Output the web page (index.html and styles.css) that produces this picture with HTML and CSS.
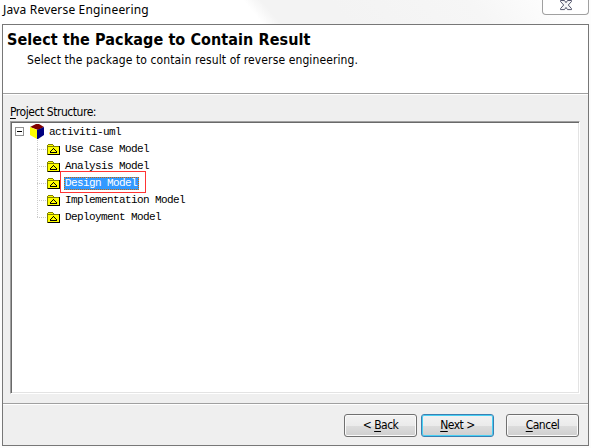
FILE: index.html
```html
<!DOCTYPE html>
<html lang="en">
<head>
<meta charset="utf-8">
<title>Java Reverse Engineering</title>
<link rel="stylesheet" href="styles.css">
</head>
<body>
<svg class="defs" width="0" height="0">
  <symbol id="folder" viewBox="0 0 14 12" shape-rendering="crispEdges">
    <path fill="#808000" d="M1 0h5v1h1v1h6v9H0V1h1z"/>
    <path fill="#ff0" d="M1 1h5v1H1zM1 3h11v7H1z"/>
    <path fill="#000" d="M12 2h1v9H1v-1h11zM6 4h1v1H6zM5 5h1v1H5zM7 5h1v1H7zM4 6h1v1H4zM8 6h1v1H8zM3 7h1v1H3zM9 7h1v1H9zM3 8h7v1H3z"/>
  </symbol>
</svg>
<header class="titlebar">
  <span class="caption">Java Reverse Engineering</span>
  <div class="close"><svg width="14" height="12" viewBox="0 0 14 12"><path d="M1.500 .5h4L7 2.700 8.500.5h4v1L9.300 5l3.200 3.600v1h-4L7 7.400 5.500 9.600h-4v-1L4.700 5 1.500 1.500z" fill="#f4f4f6" stroke="#53556c"/></svg></div>
</header>
<main class="dialog">
  <section class="banner">
    <h1>Select the Package to Contain Result</h1>
    <p>Select the package to contain result of reverse engineering.</p>
  </section>
  <section class="content">
    <div class="label"><u>P</u>roject Structure:</div>
    <div class="tree">
      <div class="row root">
        <svg class="expander" width="9" height="9" shape-rendering="crispEdges"><rect x=".5" y=".5" width="8" height="8" fill="#fff" stroke="#919191"/><path d="M2 4h5v1H2z"/></svg>
        <svg class="cube" width="14" height="15" viewBox="0 0 14 15"><path fill="#800000" d="M6 0h3l5 3-6 3-8-3z"/><path fill="#ff0" d="M0 3l7 3v9l-7-4z"/><path fill="#000080" d="M7 6l7-3v8l-6 4H7z"/></svg>
        <span>activiti-uml</span>
      </div>
      <div class="children">
        <div class="row"><svg class="folder"><use href="#folder"/></svg><span>Use Case Model</span></div>
        <div class="row"><svg class="folder"><use href="#folder"/></svg><span>Analysis Model</span></div>
        <div class="row"><svg class="folder"><use href="#folder"/></svg><span class="selected">Design Model</span><i class="marker"></i></div>
        <div class="row"><svg class="folder"><use href="#folder"/></svg><span>Implementation Model</span></div>
        <div class="row"><svg class="folder"><use href="#folder"/></svg><span>Deployment Model</span></div>
      </div>
    </div>
  </section>
  <footer class="actions">
    <button class="back"><span>&lt; <u>B</u>ack</span></button>
    <button class="next"><span><u>N</u>ext &gt;</span></button>
    <button class="cancel"><span><u>C</u>ancel</span></button>
  </footer>
</main>
</body>
</html>
```
FILE: styles.css
```css
* { box-sizing: border-box; }
body {
  margin: 0;
  width: 591px;
  height: 448px;
  overflow: hidden;
  background: #fcfcfc;
  color: #000;
  font: 12px/15px "DejaVu Sans Condensed", "DejaVu Sans", sans-serif;
}
.defs { position: absolute; }
.titlebar {
  height: 24px;
  display: flex;
  justify-content: space-between;
  padding: 0 2px 0 3px;
  background: linear-gradient(50deg, #fff 0 43%, #f3f3f3 46% 57%, #f6f6f6 80%, #fdfdfd 93%);
}
.caption { font: 12px/20px "Noto Sans", sans-serif; letter-spacing: .17px; white-space: nowrap; }
.close {
  width: 47px;
  height: 15px;
  border: 1px solid #a0a0a0;
  border-top: 0;
  border-radius: 0 0 4px 4px;
  background: #fff;
  display: flex;
  justify-content: center;
}
.dialog {
  margin-left: 2px;
  width: 587px;
  height: 422px;
  border: 1px solid #777;
  background: #efefef;
  display: flex;
  flex-direction: column;
}
.banner {
  height: 70px;
  padding: 5px 0 0 4px;
  background: #fff;
  box-shadow: inset 0 -1px #fff, inset 0 -2px #a0a0a0;
}
h1 { margin: 0; font-size: 16px; line-height: 20px; letter-spacing: .08px; white-space: nowrap; }
p { margin: 2px 0 0 20px; line-height: 16px; letter-spacing: .11px; white-space: nowrap; }
.content { height: 308px; padding: 10px 8px 0 7px; }
.label { height: 16px; line-height: 15px; letter-spacing: -.45px; }
u { text-decoration: underline; text-underline-offset: 2px; text-decoration-thickness: 1px; text-decoration-skip-ink: none; }
.tree {
  height: 273px;
  border: 1px solid;
  border-color: #a0a0a0 #fff #fff #a0a0a0;
  box-shadow: inset 1px 1px #696969, inset -1px -1px #e3e3e3;
  background: #fff;
  padding: 1px;
  font: 11px/17px "Liberation Mono", monospace;
  letter-spacing: -.6px;
}
.row { height: 17px; display: flex; align-items: center; position: relative; white-space: nowrap; }
.row span { padding-top: 1px; }
.root { padding-left: 3px; }
.cube { margin: 0 5px 0 6px; }
.children { margin-left: 25px; background: repeating-linear-gradient(#ccc 0 1px, transparent 1px 2px) 0 0 / 1px 78px no-repeat; }
.children .row { padding-left: 10px; background: repeating-linear-gradient(90deg, #ccc 0 1px, transparent 1px 2px) 0 9px / 9px 1px no-repeat; }
.folder { width: 14px; height: 12px; margin: 4px 4px 0 0; align-self: flex-start; }
.row .selected { height: 13px; line-height: 11px; margin: 1px 0 0 -1px; padding: 0 1px 0 0; background: #3399ff; color: #fff; border: 1px dotted #cc6600; }
.marker { position: absolute; left: 23px; top: -3px; width: 86px; height: 22px; border: 1px solid #ff3434; }
.actions {
  flex: 1;
  padding: 11px 9px 0;
  box-shadow: inset 0 1px #a0a0a0, inset 0 2px #fff;
  display: flex;
  justify-content: flex-end;
  gap: 4px;
}
button {
  width: 73px;
  height: 23px;
  padding: 0;
  border: 1px solid #707070;
  border-radius: 3px;
  background: linear-gradient(#f2f2f2, #ebebeb 50%, #ddd 50%, #cfcfcf);
  box-shadow: inset 0 0 0 1px #fafafa;
  color: #000;
  font: inherit;
  letter-spacing: -.5px;
}
.next { border-color: #3c7fb1; box-shadow: inset 0 0 0 1px #48d0f4; }
.cancel { margin-left: 8px; }
```
